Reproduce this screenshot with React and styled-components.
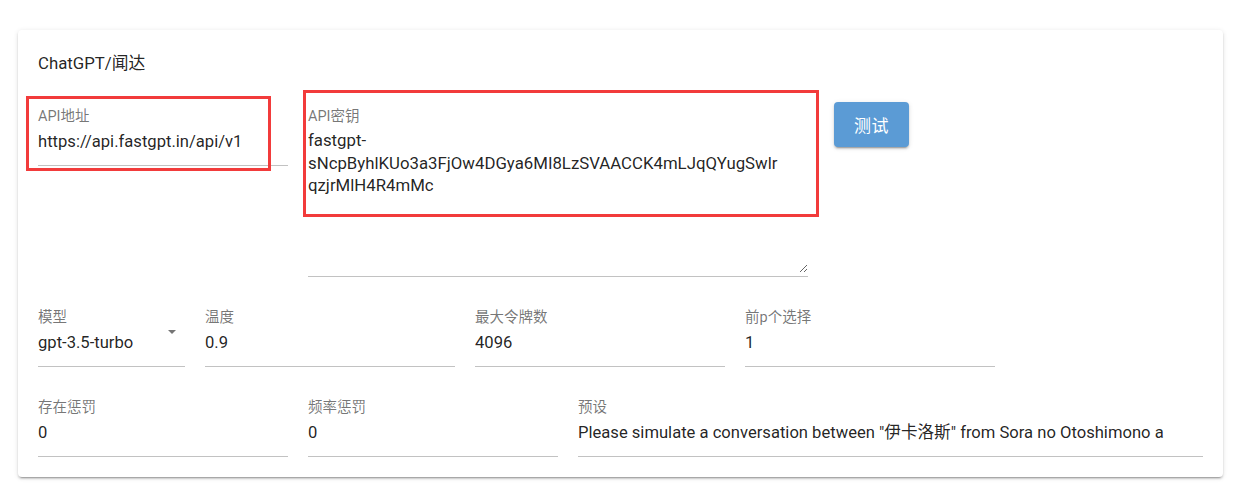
import React from 'react';
import styled, { createGlobalStyle } from 'styled-components';

const GlobalStyle = createGlobalStyle`
  body {
    margin: 0;
    background: #fff;
    font-family: Roboto, "Noto Sans CJK SC", sans-serif;
    color: rgba(0, 0, 0, 0.87);
  }
`;

const Page = styled.div`
  padding: 30px 28px 21px 18px;
`;

const Card = styled.div`
  position: relative;
  width: 1205px;
  box-sizing: border-box;
  padding: 20px;
  background: #fff;
  border-radius: 4px;
  box-shadow: 0 3px 1px -2px rgba(0, 0, 0, 0.2), 0 2px 2px 0 rgba(0, 0, 0, 0.14),
    0 1px 5px 0 rgba(0, 0, 0, 0.12);
`;

const Title = styled.div`
  font-size: 16.8px;
  line-height: 26px;
  color: rgba(0, 0, 0, 0.87);
`;

const Row = styled.div`
  display: flex;
  align-items: flex-start;
  gap: 20px;
  margin-top: ${(p) => p.$top}px;
`;

const Field = styled.div`
  width: ${(p) => (p.$width ? `${p.$width}px` : 'auto')};
  flex: ${(p) => (p.$grow ? '1 1 0' : '0 0 auto')};
  min-width: 0;
  padding-bottom: 11px;
  border-bottom: 1px solid #c2c2c2;
`;

const Label = styled.div`
  font-size: 14.5px;
  line-height: 16px;
  margin-bottom: 4px;
  color: rgba(0, 0, 0, 0.55);
  white-space: nowrap;
`;

const Value = styled.div`
  display: flex;
  align-items: flex-start;
  font-size: 16.6px;
  line-height: 25px;
  white-space: nowrap;
  overflow: hidden;
`;

const ValueText = styled.span`
  flex: 1 1 auto;
  overflow: hidden;
`;

const Caret = styled.svg`
  flex: 0 0 auto;
  width: 24px;
  height: 24px;
  margin: -11px 1px 0 0;
  fill: rgba(0, 0, 0, 0.54);
`;

const TextArea = styled.textarea`
  display: block;
  width: 100%;
  height: 144px;
  margin: 0 0 -8px;
  padding: 0;
  border: none;
  outline: none;
  resize: vertical;
  background: transparent;
  font-family: Roboto, "Noto Sans CJK SC", sans-serif;
  font-size: 16.8px;
  line-height: 22.5px;
  color: rgba(0, 0, 0, 0.87);
  overflow: hidden;
`;

const Button = styled.button`
  margin: -7px 0 0 6px;
  width: 75px;
  height: 45px;
  border: none;
  border-radius: 4px;
  background: #5b9bd5;
  color: #fff;
  font-family: Roboto, "Noto Sans CJK SC", sans-serif;
  font-size: 17px;
  letter-spacing: 0.5px;
  box-shadow: 0 3px 1px -2px rgba(0, 0, 0, 0.2), 0 2px 2px 0 rgba(0, 0, 0, 0.14),
    0 1px 5px 0 rgba(0, 0, 0, 0.12);
`;

// red annotation frames drawn over the fields
const Mark = styled.div`
  position: absolute;
  left: ${(p) => p.$x}px;
  top: ${(p) => p.$y}px;
  width: ${(p) => p.$w}px;
  height: ${(p) => p.$h}px;
  box-sizing: border-box;
  border: 3px solid #f23b3b;
  pointer-events: none;
`;

const apiKey = 'fastgpt-\nsNcpByhlKUo3a3FjOw4DGya6MI8LzSVAACCK4mLJqQYugSwlr\nqzjrMlH4R4mMc';

const App = () => (
  <Page>
    <GlobalStyle />
    <Card>
      <Title>ChatGPT/闻达</Title>

      <Row $top={33}>
        <Field $width={250}>
          <Label>API地址</Label>
          <Value>https://api.fastgpt.in/api/v1</Value>
        </Field>
        <Field $width={500}>
          <Label>API密钥</Label>
          <TextArea readOnly defaultValue={apiKey} />
        </Field>
        <Button>测试</Button>
      </Row>

      <Row $top={33}>
        <Field $width={147}>
          <Label>模型</Label>
          <Value>
            <ValueText>gpt-3.5-turbo</ValueText>
            <Caret viewBox="0 0 24 24">
              <path d="M7 10l5 5 5-5z" />
            </Caret>
          </Value>
        </Field>
        <Field $width={250}>
          <Label>温度</Label>
          <Value>0.9</Value>
        </Field>
        <Field $width={250}>
          <Label>最大令牌数</Label>
          <Value>4096</Value>
        </Field>
        <Field $width={250}>
          <Label>前p个选择</Label>
          <Value>1</Value>
        </Field>
      </Row>

      <Row $top={33}>
        <Field $width={250}>
          <Label>存在惩罚</Label>
          <Value>0</Value>
        </Field>
        <Field $width={250}>
          <Label>频率惩罚</Label>
          <Value>0</Value>
        </Field>
        <Field $grow>
          <Label>预设</Label>
          <Value>
            <ValueText>Please simulate a conversation between "伊卡洛斯" from Sora no Otoshimono a</ValueText>
          </Value>
        </Field>
      </Row>

      <Mark $x={8} $y={66} $w={245} $h={75} />
      <Mark $x={285} $y={60} $w={516} $h={127} />
    </Card>
  </Page>
);

export default App;
